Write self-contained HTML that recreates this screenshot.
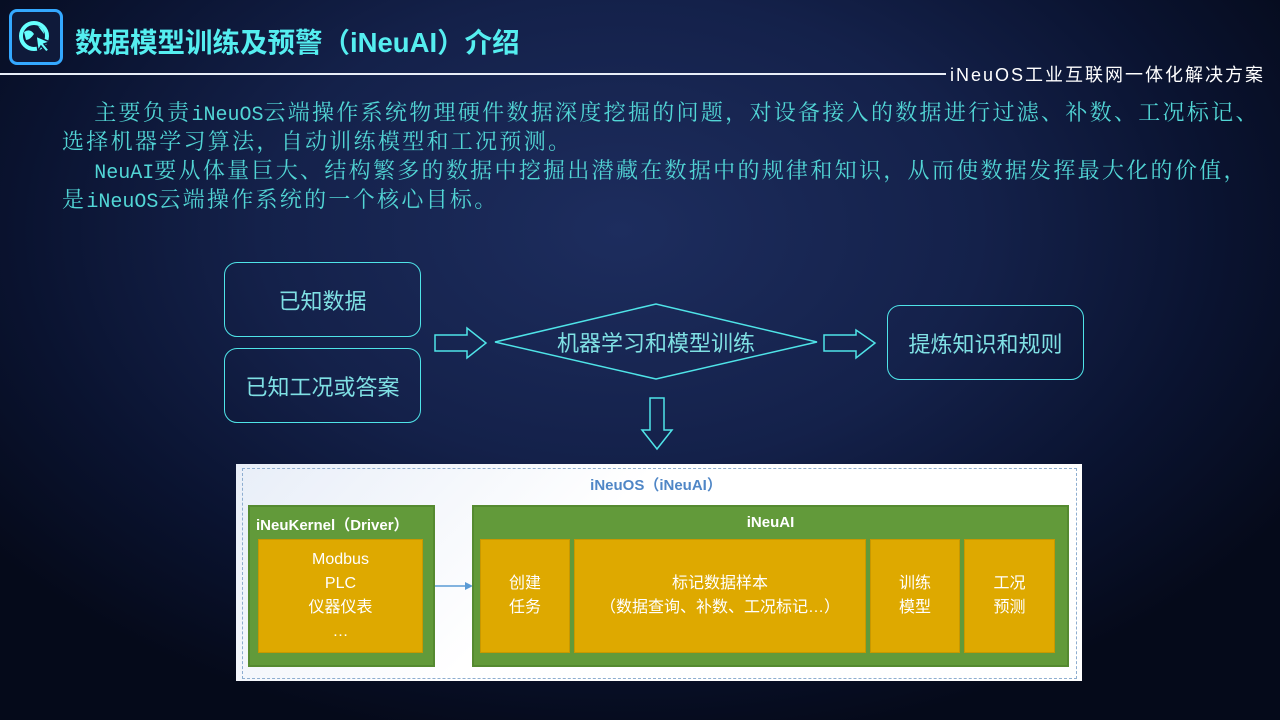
<!DOCTYPE html>
<html><head><meta charset="utf-8"><style>
*{margin:0;padding:0;box-sizing:border-box}
body{width:1280px;height:720px;overflow:hidden;position:relative;
background:radial-gradient(ellipse 800px 520px at 620px 230px,#1d2d5e 0%,#14214a 45%,#0a1330 75%,#050a1a 100%);
font-family:"Liberation Sans","Noto Sans CJK SC",sans-serif}
.abs{position:absolute}
.title{left:75px;top:20px;font-size:27.5px;font-weight:bold;color:#55eef0;white-space:nowrap}
.logo{left:9px;top:9px;width:54px;height:56px;border:3px solid #34a8ff;border-radius:8px;background:#0f1a3a}
.hline{left:0;top:73px;width:946px;height:1.5px;background:#e8eef8}
.sub{left:950px;top:61px;font-size:18px;letter-spacing:2px;color:#fff;white-space:nowrap;font-family:"Liberation Sans","Noto Sans CJK SC",sans-serif}
.pl{position:absolute;left:62px;height:29px;white-space:nowrap;font-family:"Noto Serif CJK SC",serif;font-size:22px;letter-spacing:2.3px;line-height:29px;color:#52d6d6}
.pl span{font-family:"Liberation Mono",monospace;font-size:20px;letter-spacing:0;line-height:20px}
.box{border:1.5px solid #4fe4e8;border-radius:13px;color:#7fe0e4;font-size:22px;display:flex;align-items:center;justify-content:center}
.wb{left:236px;top:464px;width:846px;height:217px;background:linear-gradient(135deg,#e8eef8,#fff 40%)}
.dash{left:242px;top:468px;width:835px;height:211px;border:1.5px dashed #8eaed0}
.g{background:#629a3a;border:2px solid #558a30}
.y{background:#dea900;border:1px solid #c89800;color:#fff;font-size:16px;display:flex;align-items:center;justify-content:center;text-align:center;line-height:24px}
.gt{color:#fff;font-weight:bold;font-size:15px}
</style></head><body>
<div class="abs logo">
<svg width="48" height="50" viewBox="0 0 48 50"><circle cx="22" cy="24" r="13" fill="none" stroke="#6ff" stroke-width="4"/><path d="M12 20 q6 -4 10 2 q-4 6 -8 6z M26 14 q6 2 6 8z" fill="#6ff"/><path d="M24 24 l14 6 -6 2 5 6 -3 2 -5 -6 -3 5z" fill="#6ff" stroke="#0f1a3a" stroke-width="1.5"/></svg></div>
<div class="abs title">数据模型训练及预警（iNeuAI）介绍</div>
<div class="abs hline"></div>
<div class="abs sub">iNeuOS工业互联网一体化解决方案</div>
<div class="pl" style="top:97px">&emsp;&nbsp;主要负责<span>iNeuOS</span>云端操作系统物理硬件数据深度挖掘的问题，对设备接入的数据进行过滤、补数、工况标记、</div>
<div class="pl" style="top:126px">选择机器学习算法，自动训练模型和工况预测。</div>
<div class="pl" style="top:155px">&emsp;&nbsp;<span>NeuAI</span>要从体量巨大、结构繁多的数据中挖掘出潜藏在数据中的规律和知识，从而使数据发挥最大化的价值，</div>
<div class="pl" style="top:184px">是<span>iNeuOS</span>云端操作系统的一个核心目标。</div>

<div class="abs box" style="left:224px;top:262px;width:197px;height:75px">已知数据</div>
<div class="abs box" style="left:224px;top:348px;width:197px;height:75px">已知工况或答案</div>
<div class="abs box" style="left:887px;top:305px;width:197px;height:75px">提炼知识和规则</div>
<svg class="abs" style="left:0;top:0" width="1280" height="460">
<g fill="none" stroke="#4fe4e8" stroke-width="1.5">
<polygon points="495,342 656,304 817,342 656,379"/>
<polygon points="435,335 467,335 467,328 486,343 467,358 467,351 435,351"/>
<polygon points="824,335 856,335 856,330 875,343 856,358 856,351 824,351"/>
<polygon points="650,398 664,398 664,430 672,430 657,449 642,430 650,430"/>
</g>
<text x="656" y="351" fill="#7fe0e4" font-size="22" text-anchor="middle" font-family="Noto Sans CJK SC,sans-serif">机器学习和模型训练</text>
</svg>

<div class="abs wb"></div>
<div class="abs dash"></div>
<div class="abs" style="left:236px;top:474px;width:840px;text-align:center;color:#4f86c6;font-weight:bold;font-size:15px">iNeuOS（iNeuAI）</div>
<div class="abs g" style="left:248px;top:505px;width:187px;height:162px"></div>
<div class="abs gt" style="left:256px;top:514px">iNeuKernel（Driver）</div>
<div class="abs y" style="left:258px;top:539px;width:165px;height:114px">Modbus<br>PLC<br>仪器仪表<br>…</div>
<svg class="abs" style="left:435px;top:580px" width="40" height="12"><line x1="0" y1="6" x2="32" y2="6" stroke="#5b9bd5" stroke-width="1.5"/><polygon points="30,2 38,6 30,10" fill="#5b9bd5"/></svg>
<div class="abs g" style="left:472px;top:505px;width:597px;height:162px"></div>
<div class="abs gt" style="left:472px;top:514px;width:597px;text-align:center">iNeuAI</div>
<div class="abs y" style="left:480px;top:539px;width:90px;height:114px">创建<br>任务</div>
<div class="abs y" style="left:574px;top:539px;width:292px;height:114px">标记数据样本<br>（数据查询、补数、工况标记…）</div>
<div class="abs y" style="left:870px;top:539px;width:90px;height:114px">训练<br>模型</div>
<div class="abs y" style="left:964px;top:539px;width:91px;height:114px">工况<br>预测</div>
</body></html>
